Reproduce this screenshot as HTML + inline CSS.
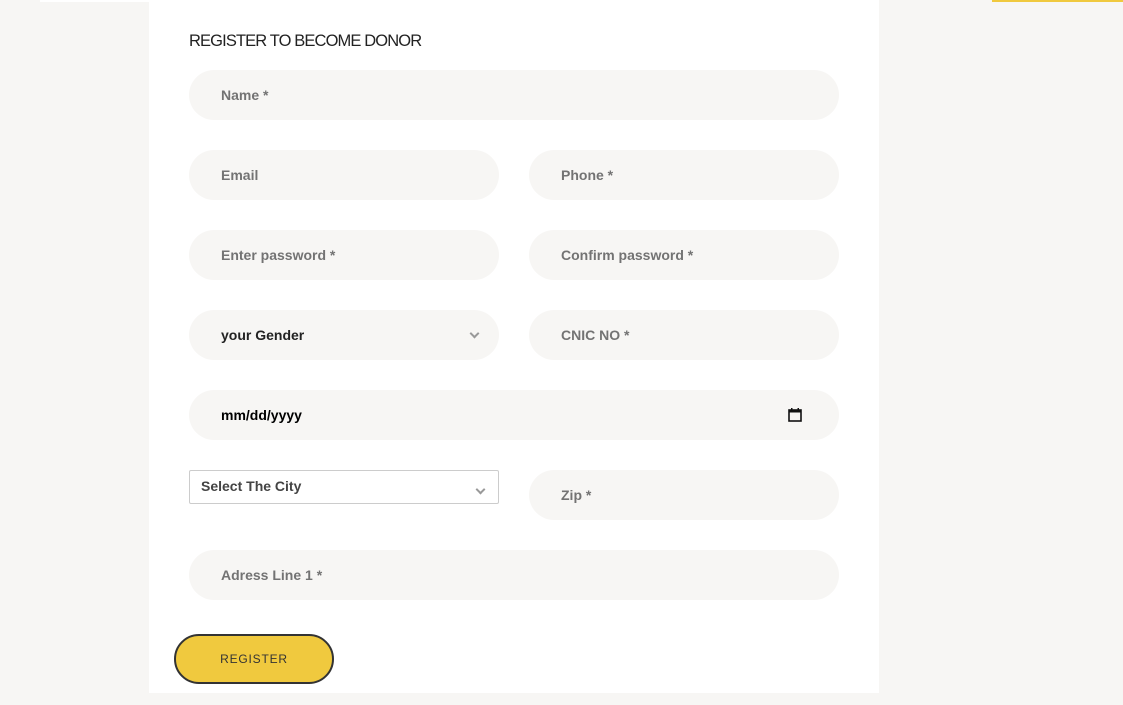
<!DOCTYPE html>
<html><head><meta charset="utf-8"><style>
html,body{margin:0;padding:0}
body{width:1123px;height:705px;background:#f7f6f4;position:relative;overflow:hidden;font-family:"Liberation Sans",Arial,sans-serif}
.abs{position:absolute}
.panel{left:149px;top:0;width:730px;height:693px;background:#fff}
.f{position:absolute;height:50px;border-radius:25px;background:#f7f6f4;box-sizing:border-box;padding-left:32px;line-height:50px;font-size:14px;font-weight:bold;color:#737373}
.dark{color:#222}
.chev{position:absolute;width:5px;height:5px;border-right:2px solid #999;border-bottom:2px solid #999;transform:rotate(45deg)}
</style></head><body>
<div class="abs" style="left:40px;top:0;width:109px;height:2px;background:#fff"></div>
<div class="abs" style="left:992px;top:0;width:131px;height:2px;background:#f0c93e"></div>
<div class="abs panel"></div>
<div class="abs" style="left:189px;top:31px;font-size:17px;color:#222;letter-spacing:-0.9px;transform:scaleX(0.97);transform-origin:left">REGISTER TO BECOME DONOR</div>
<div class="f" style="left:189px;top:70px;width:650px">Name *</div>
<div class="f" style="left:189px;top:150px;width:310px">Email</div>
<div class="f" style="left:529px;top:150px;width:310px">Phone *</div>
<div class="f" style="left:189px;top:230px;width:310px">Enter password *</div>
<div class="f" style="left:529px;top:230px;width:310px">Confirm password *</div>
<div class="f dark" style="left:189px;top:310px;width:310px">your Gender<div class="chev" style="left:282px;top:20px"></div></div>
<div class="f" style="left:529px;top:310px;width:310px">CNIC NO *</div>
<div class="f" style="left:189px;top:390px;width:650px;color:#000">mm/dd/yyyy
<svg class="abs" style="left:598px;top:17px" width="16" height="16" viewBox="0 0 16 16"><rect x="2" y="3" width="12" height="11" fill="none" stroke="#111" stroke-width="1.6"/><rect x="2" y="3" width="12" height="2.5" fill="#111"/><rect x="4" y="1" width="1.5" height="3" fill="#111"/><rect x="10.5" y="1" width="1.5" height="3" fill="#111"/></svg></div>
<div class="abs" style="left:189px;top:470px;width:310px;height:34px;box-sizing:border-box;border:1px solid #ccc;border-radius:2px;background:#fff;padding-left:11px;line-height:30px;font-size:14px;font-weight:bold;color:#444">Select The City<div class="chev" style="left:287px;top:15px"></div></div>
<div class="f" style="left:529px;top:470px;width:310px">Zip *</div>
<div class="f" style="left:189px;top:550px;width:650px">Adress Line 1 *</div>
<div class="abs" style="left:174px;top:634px;width:160px;height:50px;box-sizing:border-box;border:2px solid #333;border-radius:25px;background:#f0c93e;text-align:center;line-height:46px;font-size:12px;letter-spacing:0.8px;color:#333">REGISTER</div>
</body></html>
